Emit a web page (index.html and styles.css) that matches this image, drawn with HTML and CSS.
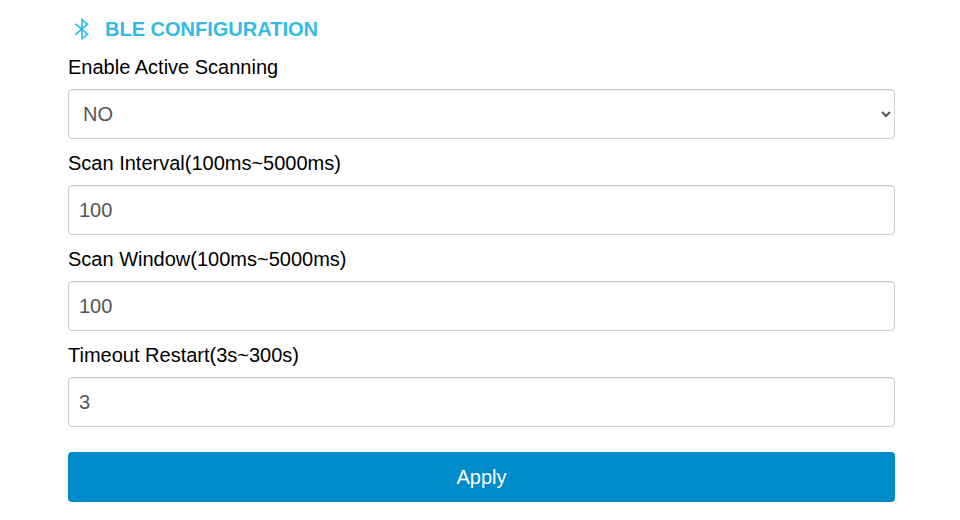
FILE: index.html
```html
<!DOCTYPE html>
<html lang="en">
<head>
<meta charset="utf-8">
<title>BLE Configuration</title>
<link rel="stylesheet" href="styles.css">
</head>
<body>
<form class="panel">
  <h1 class="title">
    <svg class="icon" viewBox="0 0 16 24" fill="none" stroke="currentColor" stroke-width="1.7"><path d="M1.4 6.8 13.5 17.2 8 21.8V2.6L13.5 7.2 1.4 17.6"/></svg>
    <span>BLE CONFIGURATION</span>
  </h1>
  <label class="label" for="active">Enable Active Scanning</label>
  <select class="control" id="active"><option>NO</option><option>YES</option></select>
  <label class="label" for="interval">Scan Interval(100ms~5000ms)</label>
  <input class="control" id="interval" type="text" value="100">
  <label class="label" for="window">Scan Window(100ms~5000ms)</label>
  <input class="control" id="window" type="text" value="100">
  <label class="label" for="timeout">Timeout Restart(3s~300s)</label>
  <input class="control" id="timeout" type="text" value="3">
  <button class="apply" type="button">Apply</button>
</form>
</body>
</html>
```
FILE: styles.css
```css
* { box-sizing: border-box; }
body {
  margin: 0;
  background: #fff;
  color: #000;
  font: 20px/30px "Liberation Sans", Arial, sans-serif;
}
.panel {
  display: flex;
  flex-direction: column;
  width: 827px;
  margin-left: 68px;
  padding-top: 14px;
}
.title {
  display: flex;
  align-items: center;
  height: 30px;
  margin: 0 0 8px;
  padding-left: 6px;
  color: #33bbe6;
  font-size: 20px;
  font-weight: bold;
}
.icon {
  width: 16px;
  height: 24px;
  margin-right: 15px;
}
.label {
  height: 30px;
  margin-bottom: 7px;
}
.control {
  width: 100%;
  height: 50px;
  margin: 0 0 9px;
  padding: 6px 10px;
  border: 1px solid #ccc;
  border-radius: 4px;
  background-color: #fff;
  box-shadow: inset 0 1px 1px rgba(0, 0, 0, 0.075);
  color: #555;
  font: inherit;
}
.apply {
  height: 50px;
  margin-top: 16px;
  padding: 0;
  border: 0;
  border-radius: 4px;
  background: #008bcb;
  color: #fff;
  font: inherit;
}
```
